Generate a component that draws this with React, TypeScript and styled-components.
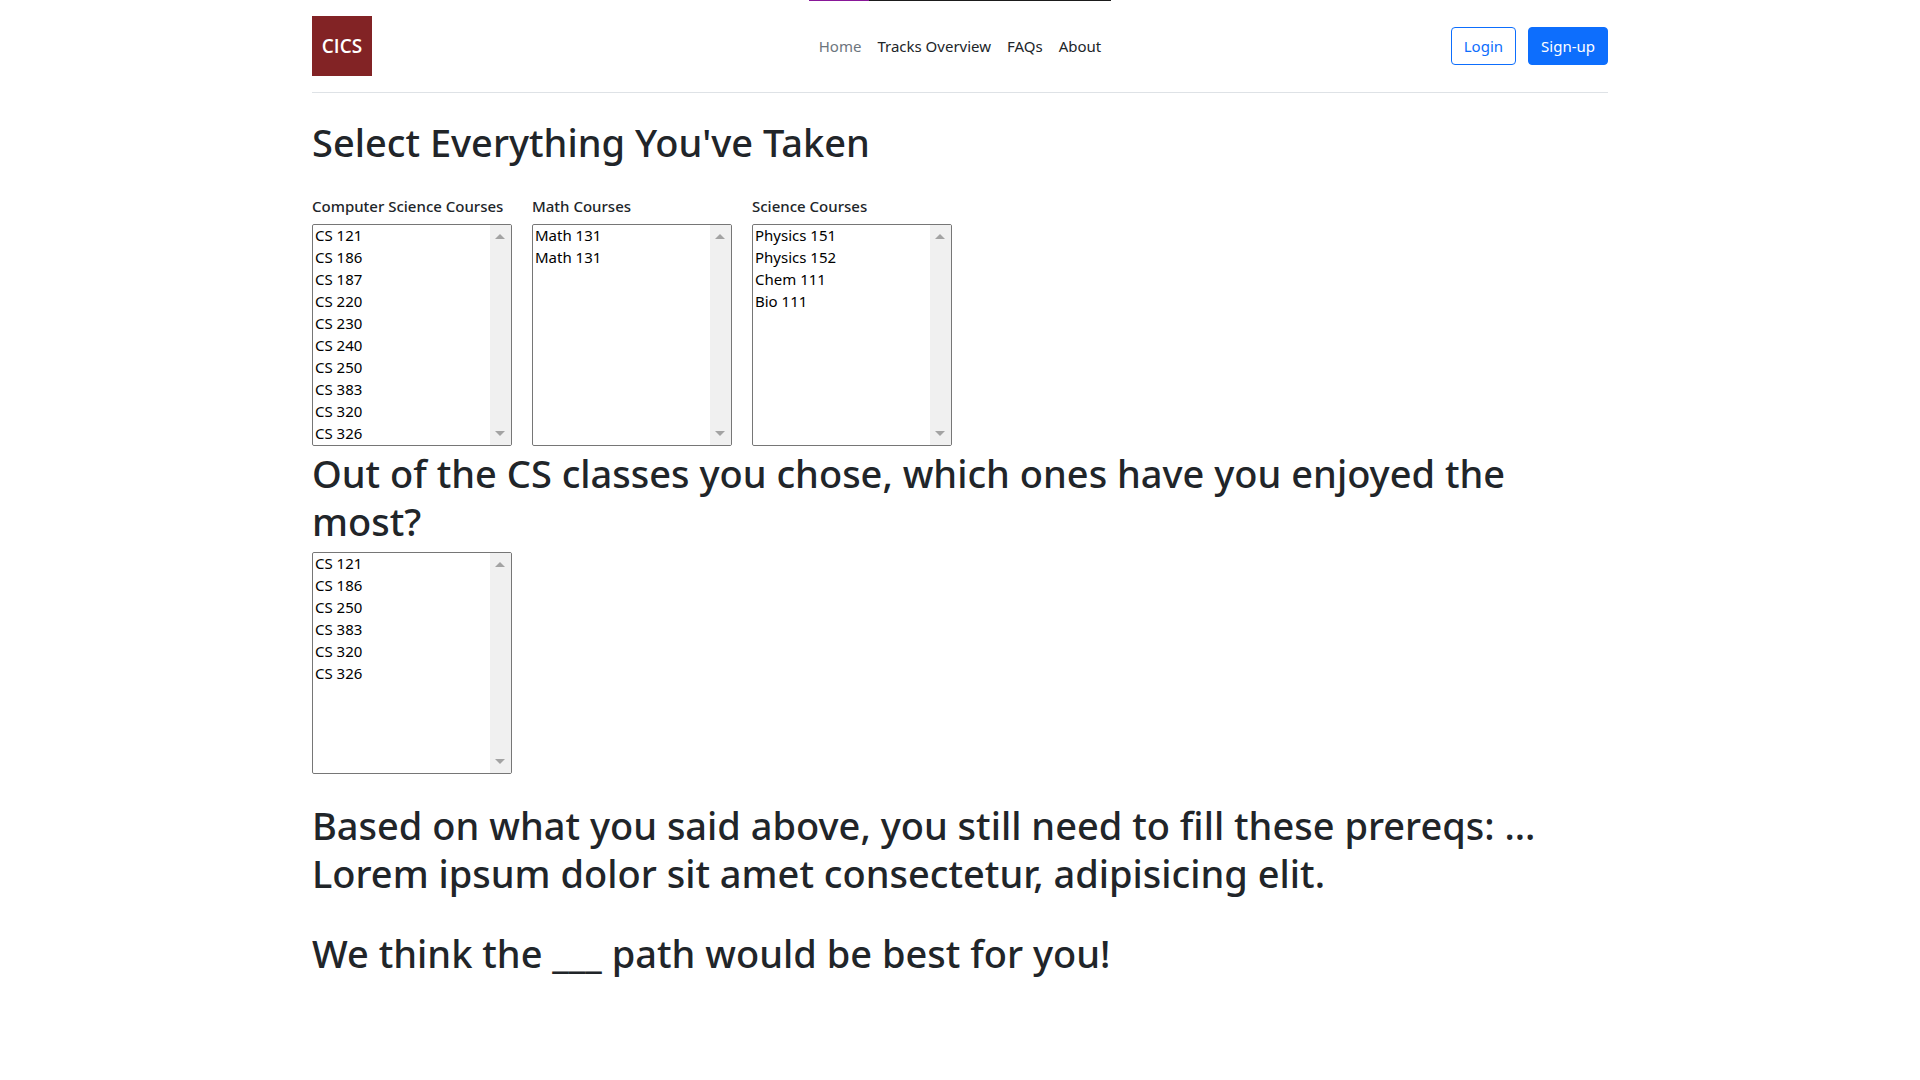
import React, { useId } from "react";
import styled, { createGlobalStyle } from "styled-components";

const GlobalStyle = createGlobalStyle`
  *, *::before, *::after {
    box-sizing: border-box;
  }
  body {
    margin: 0;
    background: #fff;
    color: #212529;
    font-family: "Noto Sans", "Open Sans", sans-serif;
    font-size: 15px;
    line-height: 24px;
  }
`;

const TopStrip = styled.div`
  position: absolute;
  top: 0;
  left: 50%;
  width: 302px;
  height: 1px;
  margin-left: -151px;
  background: linear-gradient(to right, #881798 60px, #1b1b1b 60px);
`;

const Container = styled.div`
  max-width: 1320px;
  margin: 0 auto;
  padding: 0 12px;
`;

const Header = styled.header`
  display: grid;
  grid-template-columns: 1fr auto 1fr;
  align-items: center;
  padding: 16px 0;
  margin-bottom: 24px;
  border-bottom: 1px solid #dee2e6;
`;

const Logo = styled.a`
  display: flex;
  align-items: center;
  justify-content: center;
  width: 60px;
  height: 60px;
  background: #822325;
  color: #fff;
  font-family: "Open Sans", "Noto Sans", sans-serif;
  font-size: 19px;
  font-weight: 600;
  text-decoration: none;
`;

const Nav = styled.nav`
  display: flex;
`;

const NavLink = styled.a<{ $current?: boolean }>`
  padding: 8px;
  color: ${({ $current }) => ($current ? "#6c757d" : "#212529")};
  text-decoration: none;
`;

const Actions = styled.div`
  display: flex;
  justify-content: flex-end;
  gap: 12px;
`;

const Button = styled.button<{ $filled?: boolean }>`
  height: 38px;
  padding: 0 12px;
  border: 1px solid #0d6efd;
  border-radius: 4px;
  background: ${({ $filled }) => ($filled ? "#0d6efd" : "transparent")};
  color: ${({ $filled }) => ($filled ? "#fff" : "#0d6efd")};
  font: inherit;
  cursor: pointer;
`;

const Heading = styled.h1<{ $spaced?: boolean }>`
  margin: 0 0 ${({ $spaced }) => ($spaced ? "31px" : "7px")};
  padding-top: 1px;
  font-size: 38px;
  font-weight: 500;
  line-height: 48px;
`;

const Pickers = styled.div`
  display: flex;
  flex-wrap: wrap;
  gap: 20px;
  margin-bottom: 2px;
`;

const Results = styled.section`
  padding-top: 26px;
`;

const PickerColumn = styled.div`
  width: 200px;
`;

const PickerLabel = styled.label`
  display: block;
  margin-bottom: 8px;
  font-weight: 500;
  line-height: 19px;
  white-space: nowrap;
`;

const ListFrame = styled.div`
  display: flex;
  width: 200px;
  border: 1px solid #767676;
  border-radius: 2px;
  overflow: hidden;
`;

const List = styled.select`
  flex: 1;
  min-width: 0;
  height: 220px;
  margin: 0;
  padding: 0;
  border: 0;
  outline: 0;
  background: #fff;
  color: #000;
  font: inherit;
  overflow: hidden;

  option {
    min-height: 22px;
    padding: 0 2px;
    line-height: 22px;
  }
`;

const ScrollTrack = styled.div`
  display: flex;
  flex-direction: column;
  justify-content: space-between;
  align-items: center;
  width: 21px;
  padding: 9px 1px 9px 0;
  background: #f0f0f0;
`;

const Arrow = styled.span<{ $up?: boolean }>`
  border: solid transparent;
  border-width: ${({ $up }) => ($up ? "0 5px 5px" : "5px 5px 0")};
  ${({ $up }) => ($up ? "border-bottom-color" : "border-top-color")}: #a3a3a3;
`;

const CS_COURSES = [
  "CS 121", "CS 186", "CS 187", "CS 220", "CS 230",
  "CS 240", "CS 250", "CS 383", "CS 320", "CS 326",
];
const MATH_COURSES = ["Math 131", "Math 131"];
const SCIENCE_COURSES = ["Physics 151", "Physics 152", "Chem 111", "Bio 111"];
const CHOSEN_COURSES = ["CS 121", "CS 186", "CS 250", "CS 383", "CS 320", "CS 326"];

type CourseListProps = { courses: string[]; id?: string; labelledBy?: string };

function CourseList({ courses, id, labelledBy }: CourseListProps) {
  return (
    <ListFrame>
      <List id={id} aria-labelledby={labelledBy} multiple size={10}>
        {courses.map((course, i) => (
          <option key={i}>{course}</option>
        ))}
      </List>
      <ScrollTrack aria-hidden="true">
        <Arrow $up />
        <Arrow />
      </ScrollTrack>
    </ListFrame>
  );
}

function CoursePicker({ title, courses }: { title: string; courses: string[] }) {
  const id = useId();
  return (
    <PickerColumn>
      <PickerLabel htmlFor={id}>{title}</PickerLabel>
      <CourseList id={id} courses={courses} />
    </PickerColumn>
  );
}

export default function App() {
  return (
    <>
      <GlobalStyle />
      <TopStrip />
      <Container>
        <Header>
          <Logo href="#">CICS</Logo>
          <Nav>
            <NavLink href="#" $current>Home</NavLink>
            <NavLink href="#">Tracks Overview</NavLink>
            <NavLink href="#">FAQs</NavLink>
            <NavLink href="#">About</NavLink>
          </Nav>
          <Actions>
            <Button type="button">Login</Button>
            <Button type="button" $filled>Sign-up</Button>
          </Actions>
        </Header>
        <main>
          <Heading $spaced>Select Everything You've Taken</Heading>
          <Pickers>
            <CoursePicker title="Computer Science Courses" courses={CS_COURSES} />
            <CoursePicker title="Math Courses" courses={MATH_COURSES} />
            <CoursePicker title="Science Courses" courses={SCIENCE_COURSES} />
          </Pickers>
          <Heading id="enjoyed">
            Out of the CS classes you chose, which ones have you enjoyed the most?
          </Heading>
          <CourseList labelledBy="enjoyed" courses={CHOSEN_COURSES} />
          <Results>
            <Heading $spaced>
              Based on what you said above, you still need to fill these prereqs: ...
              Lorem ipsum dolor sit amet consectetur, adipisicing elit.
            </Heading>
            <Heading>We think the ___ path would be best for you!</Heading>
          </Results>
        </main>
      </Container>
    </>
  );
}
